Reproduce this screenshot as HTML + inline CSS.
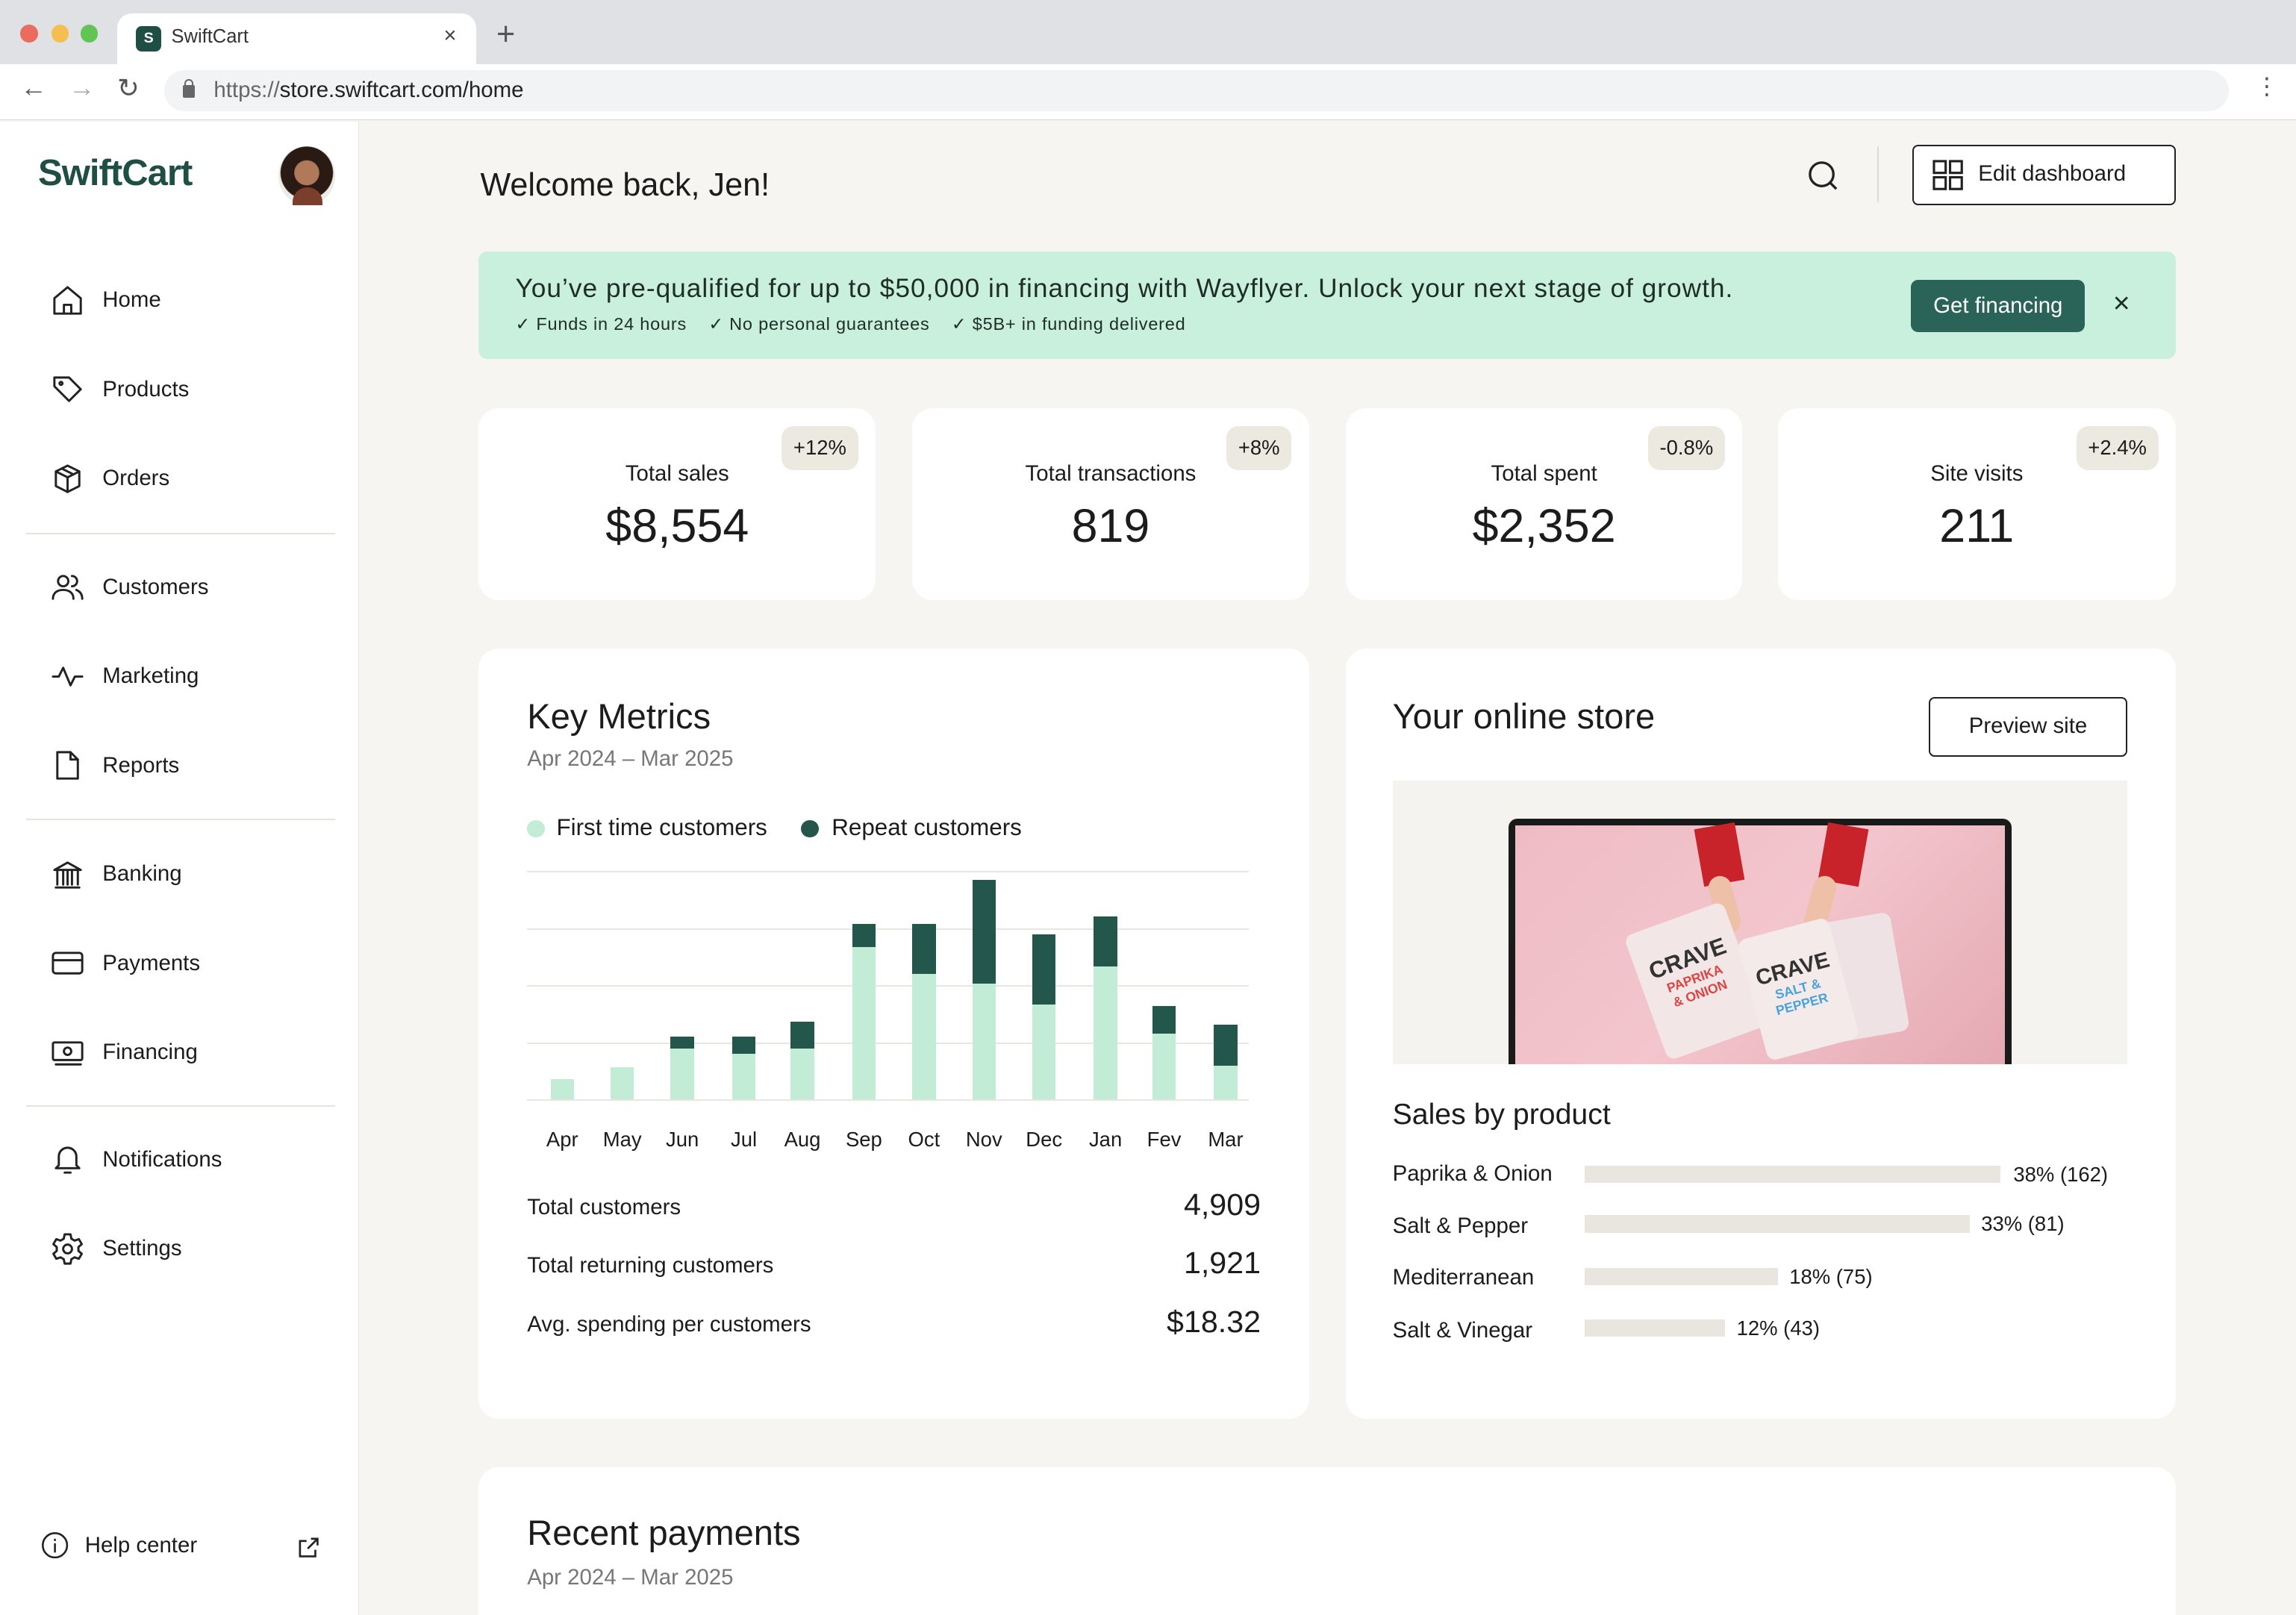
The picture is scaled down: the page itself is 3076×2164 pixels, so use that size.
<!DOCTYPE html>
<html><head><meta charset="utf-8">
<style>
*{box-sizing:border-box;margin:0;padding:0}
html,body{width:3076px;height:2164px;overflow:hidden;background:#f6f5f2}
#r{position:absolute;left:0;top:0;width:1568px;height:1103px;zoom:1.96173;font-family:"Liberation Sans",sans-serif;color:#1c1c1c;background:#f6f5f2;overflow:hidden}
.a{position:absolute}
.t{white-space:nowrap}
.card{position:absolute;background:#fff;border-radius:14px}
.nav{position:absolute;left:34px;font-size:15px;display:flex;align-items:center}
.nav svg{width:24px;height:24px;margin-right:12px;fill:none;stroke:#222;stroke-width:1.5;stroke-linecap:round;stroke-linejoin:round}
.badge{position:absolute;background:#ece9e1;border-radius:8px;font-size:14px;padding:0 8px;height:30px;line-height:30px;top:12px;right:12px}
.kl{position:absolute;width:100%;text-align:center;top:36px;font-size:15px}
.kv{position:absolute;width:100%;text-align:center;top:62px;font-size:32px}
.grid{position:absolute;left:360px;width:493px;height:1px;background:#e8e6e0}
.bar{position:absolute;width:16px}
.lt{background:#c3ecd6}.dk{background:#24574b}
.mo{position:absolute;top:770px;font-size:14px;width:40px;text-align:center}
.sp{position:absolute;left:951px;font-size:15px}
.sb{position:absolute;left:1082px;height:12px;background:#e8e6df}
.sv{position:absolute;font-size:14px}
</style></head><body><div id="r">
<div class="a" style="left:0;top:0;width:1568px;height:44px;background:#dfe1e5"></div>
<div class="a" style="left:14px;top:17px;width:12px;height:12px;border-radius:50%;background:#ec6a5e"></div>
<div class="a" style="left:35px;top:17px;width:12px;height:12px;border-radius:50%;background:#f4bf4f"></div>
<div class="a" style="left:55px;top:17px;width:12px;height:12px;border-radius:50%;background:#61c554"></div>
<div class="a" style="left:80px;top:9px;width:245px;height:35px;background:#fff;border-radius:10px 10px 0 0"></div>
<div class="a" style="left:93px;top:18px;width:17px;height:17px;border-radius:4px;background:#1f4f44;color:#fff;font-size:10px;font-weight:bold;text-align:center;line-height:17px">S</div>
<div class="a t" style="left:117px;top:18px;font-size:13px;color:#333">SwiftCart</div>
<div class="a t" style="left:303px;top:16px;font-size:15px;color:#444">×</div>
<div class="a t" style="left:339px;top:11px;font-size:22px;color:#555">+</div>
<div class="a" style="left:0;top:44px;width:1568px;height:38px;background:#fff;border-bottom:1px solid #d6d6d6"></div>
<div class="a t" style="left:14px;top:50px;font-size:18px;color:#555">←</div>
<div class="a t" style="left:47px;top:50px;font-size:18px;color:#aaa">→</div>
<div class="a t" style="left:80px;top:50px;font-size:18px;color:#555">↻</div>
<div class="a" style="left:112px;top:48px;width:1410px;height:28px;border-radius:14px;background:#f1f3f4"></div>
<div class="a" style="left:125px;top:58px;width:8px;height:9px;background:#666;border-radius:1px"></div>
<div class="a" style="left:126px;top:54px;width:6px;height:6px;border:1.5px solid #666;border-bottom:none;border-radius:3px 3px 0 0"></div>
<div class="a t" style="left:146px;top:53px;font-size:15px;color:#222"><span style="color:#666">https://</span>store.swiftcart.com/home</div>
<div class="a t" style="left:1540px;top:50px;font-size:16px;color:#555">⋮</div>
<div class="a" style="left:0;top:83px;width:245px;height:1020px;background:#fff;border-right:1px solid #e6e4df"></div>
<div class="a t" style="left:26px;top:104px;font-size:25px;font-weight:bold;color:#1f4f44;letter-spacing:-0.5px">SwiftCart</div>
<div class="a" style="left:190px;top:100px;width:39px;height:40px;border-radius:50%;background:radial-gradient(circle at 50% 45%,#b07a5a 0 28%,#2a1a14 30% 60%,#ecebe6 62%)"></div>
<div class="a" style="left:200px;top:128px;width:20px;height:12px;border-radius:10px 10px 0 0;background:#7a3e2a"></div>
<div class="nav" style="top:193px"><svg viewBox="0 0 24 24"><path d="M3 10.5L12 3l9 7.5V21H3z"/><path d="M9.5 21v-6h5v6"/></svg>Home</div>
<div class="nav" style="top:254px"><svg viewBox="0 0 24 24"><path d="M3 4h10l8 8-8 8-10-10z"/><circle cx="7.5" cy="8" r="1"/></svg>Products</div>
<div class="nav" style="top:315px"><svg viewBox="0 0 24 24"><path d="M12 3l8 4v10l-8 4-8-4V7z"/><path d="M4 7l8 4 8-4M12 11v10M8 5l8 4"/></svg>Orders</div>
<div class="a" style="left:18px;top:364px;width:211px;height:1px;background:#e5e3de"></div>
<div class="nav" style="top:389px"><svg viewBox="0 0 24 24"><circle cx="9" cy="8" r="3.5"/><path d="M2 20c0-4 3-6 7-6s7 2 7 6M15 4.5a3.5 3.5 0 010 7M18 14c2.5 1 4 3 4 6"/></svg>Customers</div>
<div class="nav" style="top:450px"><svg viewBox="0 0 24 24"><path d="M2 12h4l3-6 5 12 3-6h5"/></svg>Marketing</div>
<div class="nav" style="top:511px"><svg viewBox="0 0 24 24"><path d="M5 3h9l5 5v13H5z"/><path d="M14 3v5h5"/></svg>Reports</div>
<div class="a" style="left:18px;top:559px;width:211px;height:1px;background:#e5e3de"></div>
<div class="nav" style="top:585px"><svg viewBox="0 0 24 24"><path d="M3 9l9-5 9 5zM4 21h16M5 10v9M9 10v9M12 10v9M15 10v9M19 10v9"/></svg>Banking</div>
<div class="nav" style="top:646px"><svg viewBox="0 0 24 24"><rect x="2" y="5" width="20" height="14" rx="2"/><path d="M2 10h20"/></svg>Payments</div>
<div class="nav" style="top:707px"><svg viewBox="0 0 24 24"><rect x="2" y="5" width="20" height="12" rx="1"/><circle cx="12" cy="11" r="2.5"/><path d="M4 20h17"/></svg>Financing</div>
<div class="a" style="left:18px;top:755px;width:211px;height:1px;background:#e5e3de"></div>
<div class="nav" style="top:780px"><svg viewBox="0 0 24 24"><path d="M6 16V10a6 6 0 0112 0v6l2 2H4z"/><path d="M10 21h4"/></svg>Notifications</div>
<div class="nav" style="top:841px"><svg viewBox="0 0 24 24"><circle cx="12" cy="12" r="3"/><path d="M10 2h4l.6 3 2.2 1.3 2.9-1 2 3.4-2.3 2v2.6l2.3 2-2 3.4-2.9-1-2.2 1.3-.6 3h-4l-.6-3-2.2-1.3-2.9 1-2-3.4 2.3-2v-2.6l-2.3-2 2-3.4 2.9 1L9.4 5z"/></svg>Settings</div>
<div class="nav" style="top:1045px;left:27px;font-size:15px"><svg viewBox="0 0 24 24" style="width:21px;height:21px;margin-right:10px"><circle cx="12" cy="12" r="9.5"/><path d="M12 11v6M12 7.5v.5"/></svg>Help center</div>
<svg class="a" style="left:202px;top:1048px;width:18px;height:18px" viewBox="0 0 24 24" fill="none" stroke="#222" stroke-width="1.8"><path d="M18 14v6H4V6h6M14 4h6v6M20 4l-9 9"/></svg>
<div class="a t" style="left:328px;top:114px;font-size:22px">Welcome back, Jen!</div>
<svg class="a" style="left:1233px;top:108px;width:24px;height:24px" viewBox="0 0 24 24" fill="none" stroke="#222" stroke-width="1.7"><circle cx="11" cy="11" r="8"/><path d="M17 17l4 4"/></svg>
<div class="a" style="left:1282px;top:100px;width:1px;height:38px;background:#dedcd6"></div>
<div class="a" style="left:1306px;top:99px;width:180px;height:41px;border:1.5px solid #222;border-radius:4px;background:#fff"></div>
<svg class="a" style="left:1320px;top:109px;width:21px;height:21px" viewBox="0 0 21 21" fill="none" stroke="#222" stroke-width="1.6"><rect x="1" y="1" width="8" height="8"/><rect x="12" y="1" width="8" height="8"/><rect x="1" y="12" width="8" height="8"/><rect x="12" y="12" width="8" height="8"/></svg>
<div class="a t" style="left:1351px;top:110px;font-size:15px">Edit dashboard</div>
<div class="a" style="left:327px;top:172px;width:1159px;height:73px;background:#c8f0dc;border-radius:6px"></div>
<div class="a t" style="left:352px;top:187px;font-size:18px;color:#1f2d28;letter-spacing:0.5px">You’ve pre-qualified for up to $50,000 in financing with Wayflyer. Unlock your next stage of growth.</div>
<div class="a t" style="left:352px;top:214px;font-size:12px;color:#1f2d28;letter-spacing:0.4px">✓ Funds in 24 hours &nbsp;&nbsp;&nbsp;✓ No personal guarantees &nbsp;&nbsp;&nbsp;✓ $5B+ in funding delivered</div>
<div class="a t" style="left:1305px;top:191px;width:119px;height:36px;background:#2a6357;color:#fff;border-radius:5px;font-size:15px;text-align:center;line-height:36px">Get financing</div>
<div class="a t" style="left:1443px;top:196px;font-size:20px;color:#1f2d28">×</div>
<div class="card" style="left:327px;top:279px;width:271px;height:131px"><div class="badge">+12%</div><div class="kl">Total sales</div><div class="kv">$8,554</div></div>
<div class="card" style="left:623px;top:279px;width:271px;height:131px"><div class="badge">+8%</div><div class="kl">Total transactions</div><div class="kv">819</div></div>
<div class="card" style="left:919px;top:279px;width:271px;height:131px"><div class="badge">-0.8%</div><div class="kl">Total spent</div><div class="kv">$2,352</div></div>
<div class="card" style="left:1214px;top:279px;width:272px;height:131px"><div class="badge">+2.4%</div><div class="kl">Site visits</div><div class="kv">211</div></div>
<div class="card" style="left:327px;top:443px;width:567px;height:526px"></div>
<div class="a t" style="left:360px;top:475px;font-size:24px">Key Metrics</div>
<div class="a t" style="left:360px;top:510px;font-size:15px;color:#777">Apr 2024 – Mar 2025</div>
<div class="a" style="left:360px;top:560px;width:12px;height:12px;border-radius:50%;background:#c3ecd6"></div>
<div class="a t" style="left:380px;top:556px;font-size:16px">First time customers</div>
<div class="a" style="left:547px;top:560px;width:12px;height:12px;border-radius:50%;background:#24574b"></div>
<div class="a t" style="left:568px;top:556px;font-size:16px">Repeat customers</div>
<div class="grid" style="top:595px"></div><div class="grid" style="top:634px"></div><div class="grid" style="top:673px"></div><div class="grid" style="top:712px"></div><div class="grid" style="top:751px"></div>
<div class="bar lt" style="left:376px;top:737px;height:14px"></div>
<div class="bar lt" style="left:417px;top:729px;height:22px"></div>
<div class="bar dk" style="left:458px;top:708px;height:8px"></div><div class="bar lt" style="left:458px;top:716px;height:35px"></div>
<div class="bar dk" style="left:500px;top:708px;height:12px"></div><div class="bar lt" style="left:500px;top:720px;height:31px"></div>
<div class="bar dk" style="left:540px;top:698px;height:18px"></div><div class="bar lt" style="left:540px;top:716px;height:35px"></div>
<div class="bar dk" style="left:582px;top:631px;height:16px"></div><div class="bar lt" style="left:582px;top:647px;height:104px"></div>
<div class="bar dk" style="left:623px;top:631px;height:34px"></div><div class="bar lt" style="left:623px;top:665px;height:86px"></div>
<div class="bar dk" style="left:664px;top:601px;height:71px"></div><div class="bar lt" style="left:664px;top:672px;height:79px"></div>
<div class="bar dk" style="left:705px;top:638px;height:48px"></div><div class="bar lt" style="left:705px;top:686px;height:65px"></div>
<div class="bar dk" style="left:747px;top:626px;height:34px"></div><div class="bar lt" style="left:747px;top:660px;height:91px"></div>
<div class="bar dk" style="left:787px;top:687px;height:19px"></div><div class="bar lt" style="left:787px;top:706px;height:45px"></div>
<div class="bar dk" style="left:829px;top:700px;height:28px"></div><div class="bar lt" style="left:829px;top:728px;height:23px"></div>
<div class="mo" style="left:364px">Apr</div><div class="mo" style="left:405px">May</div><div class="mo" style="left:446px">Jun</div><div class="mo" style="left:488px">Jul</div><div class="mo" style="left:528px">Aug</div><div class="mo" style="left:570px">Sep</div><div class="mo" style="left:611px">Oct</div><div class="mo" style="left:652px">Nov</div><div class="mo" style="left:693px">Dec</div><div class="mo" style="left:735px">Jan</div><div class="mo" style="left:775px">Fev</div><div class="mo" style="left:817px">Mar</div>
<div class="a t" style="left:360px;top:816px;font-size:15px">Total customers</div>
<div class="a t" style="left:700px;width:161px;text-align:right;top:811px;font-size:21px">4,909</div>
<div class="a t" style="left:360px;top:856px;font-size:15px">Total returning customers</div>
<div class="a t" style="left:700px;width:161px;text-align:right;top:851px;font-size:21px">1,921</div>
<div class="a t" style="left:360px;top:896px;font-size:15px">Avg. spending per customers</div>
<div class="a t" style="left:700px;width:161px;text-align:right;top:891px;font-size:21px">$18.32</div>
<div class="card" style="left:919px;top:443px;width:567px;height:526px"></div>
<div class="a t" style="left:951px;top:475px;font-size:24px">Your online store</div>
<div class="a t" style="left:1317px;top:476px;width:136px;height:41px;border:1.5px solid #222;border-radius:4px;font-size:15px;text-align:center;line-height:38px">Preview site</div>
<div class="a" style="left:951px;top:533px;width:502px;height:194px;background:#f4f3ef"></div>
<div class="a" style="left:1030px;top:559px;width:344px;height:168px;background:#1a1a1a;border-radius:6px 6px 0 0"></div>
<div class="a" style="left:1035px;top:564px;width:334px;height:163px;background:linear-gradient(135deg,#eebcc4,#f3c5cc 50%,#e5a9b3)"></div>
<div class="a" style="left:1160px;top:564px;width:28px;height:40px;background:#c8222a;transform:rotate(-10deg)"></div>
<div class="a" style="left:1245px;top:564px;width:28px;height:40px;background:#c8222a;transform:rotate(10deg)"></div>
<div class="a" style="left:1170px;top:598px;width:16px;height:40px;background:#efc0a8;border-radius:8px;transform:rotate(-15deg)"></div>
<div class="a" style="left:1235px;top:598px;width:16px;height:40px;background:#efc0a8;border-radius:8px;transform:rotate(15deg)"></div>
<div class="a" style="left:1122px;top:625px;width:72px;height:90px;background:#f2e6e6;transform:rotate(-20deg);border-radius:6px;font:bold 16px 'Liberation Sans';color:#333;text-align:center;padding-top:20px">CRAVE<div style="font-size:9px;color:#d44">PAPRIKA<br>&amp; ONION</div></div>
<div class="a" style="left:1228px;top:628px;width:70px;height:82px;background:#efe2e4;transform:rotate(-10deg);border-radius:6px"></div>
<div class="a" style="left:1196px;top:633px;width:64px;height:85px;background:#f4eaea;transform:rotate(-15deg);border-radius:6px;font:bold 15px 'Liberation Sans';color:#333;text-align:center;padding-top:20px">CRAVE<div style="font-size:9px;color:#4aa3d8">SALT &amp;<br>PEPPER</div></div>
<div class="a t" style="left:951px;top:750px;font-size:20px">Sales by product</div>
<div class="sp" style="top:793px">Paprika &amp; Onion</div><div class="sb" style="top:796px;width:284px"></div><div class="sv" style="left:1375px;top:794px">38% (162)</div>
<div class="sp" style="top:829px">Salt &amp; Pepper</div><div class="sb" style="top:830px;width:263px"></div><div class="sv" style="left:1353px;top:828px">33% (81)</div>
<div class="sp" style="top:864px">Mediterranean</div><div class="sb" style="top:866px;width:132px"></div><div class="sv" style="left:1222px;top:864px">18% (75)</div>
<div class="sp" style="top:900px">Salt &amp; Vinegar</div><div class="sb" style="top:901px;width:96px"></div><div class="sv" style="left:1186px;top:899px">12% (43)</div>
<div class="card" style="left:327px;top:1002px;width:1159px;height:140px"></div>
<div class="a t" style="left:360px;top:1033px;font-size:24px">Recent payments</div>
<div class="a t" style="left:360px;top:1069px;font-size:15px;color:#777">Apr 2024 – Mar 2025</div>
</div></body></html>
